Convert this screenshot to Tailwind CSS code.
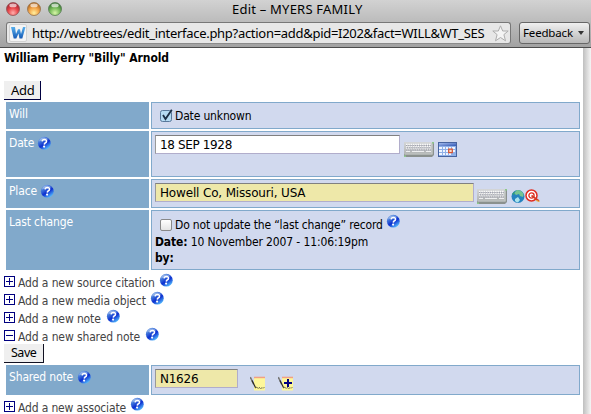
<!DOCTYPE html>
<html lang="en">
<head>
<meta charset="utf-8">
<title>Edit – MYERS FAMILY</title>
<script src="https://cdn.jsdelivr.net/npm/@tailwindcss/browser@4"></script>
</head>
<body class="w-[591px] h-[414px] overflow-hidden bg-white text-black font-['DejaVu_Sans_Condensed','DejaVu_Sans',sans-serif] text-[12px] leading-[16px] tracking-[-0.16px] whitespace-nowrap">
<svg class="absolute w-0 h-0">
  <defs>
    <radialGradient id="red" cx=".5" cy=".8" r=".7"><stop offset="0" stop-color="#ffb0ad"/><stop offset=".55" stop-color="#e9484b"/><stop offset="1" stop-color="#a82430"/></radialGradient>
    <radialGradient id="amber" cx=".5" cy=".8" r=".7"><stop offset="0" stop-color="#fff0a0"/><stop offset=".55" stop-color="#f4a64a"/><stop offset="1" stop-color="#b46a20"/></radialGradient>
    <radialGradient id="green" cx=".5" cy=".8" r=".7"><stop offset="0" stop-color="#d8f5a8"/><stop offset=".55" stop-color="#79bd5c"/><stop offset="1" stop-color="#3d7a34"/></radialGradient>
    <linearGradient id="ball" x1="0" y1="0" x2=".7" y2="1"><stop offset="0" stop-color="#8ab4e8"/><stop offset=".35" stop-color="#3f74da"/><stop offset=".62" stop-color="#0c2fd0"/><stop offset="1" stop-color="#58c0ff"/></linearGradient>
    <linearGradient id="w" x1="0" y1="0" x2="0" y2="1"><stop offset="0" stop-color="#57b0ee"/><stop offset="1" stop-color="#1659b4"/></linearGradient>
    <linearGradient id="keys" x1="0" y1="0" x2="0" y2="1"><stop offset="0" stop-color="#d4d6d8"/><stop offset="1" stop-color="#b0b3b2"/></linearGradient>
    <linearGradient id="cal" x1="0" y1="0" x2="1" y2="1"><stop offset="0" stop-color="#a4bbed"/><stop offset="1" stop-color="#3158b5"/></linearGradient>
  </defs>
  <symbol id="help" viewBox="0 0 14 14"><circle cx="7.3" cy="7.2" r="6.4" fill="url(#ball)"/><path d="M2 5.5Q3 1.5 7 1.4Q10 1.5 11.5 3.5Q6 3 2 5.5Z" fill="#fff" opacity=".35"/><path d="M5.1 5.3Q5.3 3.5 7.5 3.5Q9.6 3.6 9.5 5.3Q9.5 6.4 8.2 7Q7.4 7.4 7.3 8.6" fill="none" stroke="#fff" stroke-width="1.6"/><circle cx="7.1" cy="10.6" r="1.1" fill="#fff"/></symbol>
  <symbol id="plus" viewBox="0 0 11 11"><path d="M.5.5H10.5V10.5H.5ZM2 5.5H9M5.5 2V9" fill="#fff" stroke="#000080" shape-rendering="crispEdges"/></symbol>
  <symbol id="minus" viewBox="0 0 11 11"><path d="M.5.5H10.5V10.5H.5ZM2 5.5H9" fill="#fff" stroke="#000080" shape-rendering="crispEdges"/></symbol>
  <symbol id="keyboard" viewBox="0 0 30 15"><path d="M1 0H30V13L28 15H0V2Z" fill="#8b918e"/><path d="M0 0H28.5V12.5H0Z" fill="url(#keys)"/><path d="M2 2.5H27M2 4.7H27M2 6.9H27" stroke="#fafafa" stroke-width="1.4" stroke-dasharray="1.5 .8"/><path d="M2 3.6H27M2.8 5.8H27M2 8H27" stroke="#8a8ba0" stroke-width=".8" stroke-dasharray="1.2 1"/><path d="M2 9.4H6M8 9.4H20M22 9.4H27" stroke="#f4f5f7"/><path d="M1 12H28V1" fill="none" stroke="#c4c8c5" stroke-width="1.2"/><path d="M0 13.5H2V15H0ZM28 0H30V1.5H28Z" fill="#8cc98a"/></symbol>
  <symbol id="calendar" viewBox="0 0 19 15"><path d="M0 0H19V15H0Z" fill="#47639f"/><path d="M1 1H18V14H1Z" fill="#8fb0e8"/><path d="M1 1H18V4H1Z" fill="url(#cal)"/><path d="M1 5H4V7H1ZM5 5H7V7H5ZM8 5H10V7H8ZM11 5H13V7H11ZM14 5H17V7H14ZM1 8H4V10H1ZM5 8H7V10H5ZM8 8H10V10H8ZM15 8H17V10H15ZM1 11H4V13H1ZM5 11H7V13H5ZM8 11H10V13H8ZM11 11H13V13H11Z" fill="#f0f5ff"/><path d="M10.7 7.2H14.3V10.6H10.7Z" fill="#f4dccc" stroke="#d9532f" stroke-width="1.2"/></symbol>
  <symbol id="note" viewBox="0 0 15 15"><path d="M4 1.5H15V14.5H4Z" fill="#fdf79a"/><path d="M4 .7H15V2.2H4Z" fill="#f2a083"/><path d="M.3 1L3.7 8.3" stroke="#777" stroke-width="1.5"/><path d="M2 4.5L5.6 11.8" stroke="#292929" stroke-width="1.2"/><path d="M5.6 12L7 11L8 12.5L9.5 11.5L10.5 13L12 11.5L13 12.5L14.5 11" fill="none" stroke="#333" stroke-width=".9" stroke-dasharray="1.4 .8"/></symbol>
</svg>

<header class="h-[48px] border-b border-[#4c4c4c] bg-linear-to-b from-[#d2d2d2] to-[#a2a2a2] font-['Noto_Sans','Open_Sans',sans-serif]">
  <div class="h-[22px] flex pt-[2px] pl-[6px] gap-[7px]">
    <svg class="w-[14px] h-[14px]" viewBox="0 0 14 14"><circle cx="7" cy="7" r="6.5" fill="url(#red)" stroke="#8e5054" stroke-width=".8"/><ellipse cx="7" cy="3.4" rx="3.7" ry="1.9" fill="#fff" opacity=".65"/></svg>
    <svg class="w-[14px] h-[14px]" viewBox="0 0 14 14"><circle cx="7" cy="7" r="6.5" fill="url(#amber)" stroke="#957047" stroke-width=".8"/><ellipse cx="7" cy="3.4" rx="3.7" ry="1.9" fill="#fff" opacity=".65"/></svg>
    <svg class="w-[14px] h-[14px]" viewBox="0 0 14 14"><circle cx="7" cy="7" r="6.5" fill="url(#green)" stroke="#547850" stroke-width=".8"/><ellipse cx="7" cy="3.4" rx="3.7" ry="1.9" fill="#fff" opacity=".65"/></svg>
    <div class="ml-[163px] text-[13px] leading-[16px] tracking-[0.22px] -mt-[1px]">Edit – MYERS FAMILY</div>
  </div>
  <div class="flex">
    <div class="ml-[6px] w-[505px] h-[22px] flex border border-[#777] border-b-[#8b8b8b] rounded-[3px] bg-[#e7e7e7]">
      <div class="ml-[2px] mt-px w-[18px] h-[18px] rounded-[2px] bg-[#f4f4f4] border border-[#d2d2d2]">
        <svg class="w-[16px] h-[16px]" viewBox="0 0 16 16"><path d="M1 2H5L6 9L8 4.3H10L11 9L13 2H15.5L12.3 13.5H9.5L8.5 8.5L6.3 13.5H3.7Z" fill="url(#w)"/></svg>
      </div>
      <div class="ml-[5px] w-[455px] text-[13px] leading-[20px] tracking-[-0.29px]">http://webtrees/edit_interface.php?action=add&amp;pid=I202&amp;fact=WILL&amp;WT_SES</div>
      <svg class="ml-[5px] mt-[2px] w-[17px] h-[17px] shrink-0" viewBox="0 0 17 17"><path d="M8.5 .8L10.7 6H16.2L11.9 9.6L13.5 15.8L8.5 12.5L3.5 15.8L5.1 9.6L.8 6H6.3Z" fill="#f4f4f4" stroke="#adadad"/></svg>
    </div>
    <div class="ml-[8px] w-[71px] h-[22px] flex items-center border border-[#666] rounded-[3px] bg-linear-to-b from-[#f0f0f0] to-[#b8b8b8] pl-[3px] text-[11.5px]">
      <span class="w-[50px]">Feedback</span><svg class="ml-[5px] w-[6px] h-[4px] shrink-0" viewBox="0 0 6 4"><path d="M0 0H6L3 4Z" fill="#333"/></svg>
    </div>
  </div>
</header>

<div class="flex h-[366px]">
<main class="w-[583px] shrink-0 pl-[4px]">
  <h1 class="h-[33px] pt-[2px] font-bold tracking-[-0.08px]">William Perry "Billy" Arnold</h1>
  <div class="w-[37px] h-[19px] bg-[#efefef] border-r border-b border-[#000040] pl-[7px] text-[13px] leading-[18px] tracking-[-0.3px] font-['Noto_Sans',sans-serif]">Add</div>

  <section class="ml-[2px] mt-[2px] w-[574px] grid grid-cols-[143px_429px] gap-[2px]">
    <div class="h-[27px] bg-[#81a9cb] text-white pl-[3px] pt-[4px]">Will</div>
    <div class="h-[27px] border border-[#81a9cb] bg-[#d1d9ee] flex pl-[8px] pt-[6px]">
      <svg class="w-[13px] h-[14px]" viewBox="0 0 13 14"><rect x=".5" y="1.5" width="11" height="11" rx="2" fill="#b5daf3" stroke="#58789b"/><path d="M3 6L5.5 10L11.8 .8" fill="none" stroke="#1b2e45" stroke-width="1.8"/></svg>
      <span class="ml-[2px] -mt-px">Date unknown</span>
    </div>

    <div class="h-[46px] bg-[#81a9cb] text-white pl-[3px] pt-[4px] flex"><span class="w-[25px]">Date</span><svg class="ml-[3px] mt-px w-[14px] h-[14px]"><use href="#help"/></svg></div>
    <div class="h-[46px] border border-[#81a9cb] bg-[#d1d9ee] flex pl-[3px] pt-[3px]">
      <div class="w-[245px] h-[19px] border border-t-[#808080] border-l-[#999] border-r-[#b1adcb] border-b-[#b1adcb] bg-white pl-[4px] text-[12px] leading-[19px] tracking-[-0.36px] font-['DejaVu_Sans',sans-serif]">18 SEP 1928</div>
      <svg class="ml-[4px] mt-[7px] w-[30px] h-[15px]"><use href="#keyboard"/></svg>
      <svg class="ml-[4px] mt-[7px] w-[19px] h-[15px]"><use href="#calendar"/></svg>
    </div>

    <div class="h-[29px] bg-[#81a9cb] text-white pl-[3px] pt-[4px] flex"><span class="w-[28px]">Place</span><svg class="ml-[3px] mt-px w-[14px] h-[14px]"><use href="#help"/></svg></div>
    <div class="h-[29px] border border-[#81a9cb] bg-[#d1d9ee] flex pl-[3px] pt-[3px]">
      <div class="w-[319px] h-[19px] border border-t-[#808080] border-l-[#999] border-r-[#b1adcb] border-b-[#b1adcb] bg-[#eee8a9] pl-[4px] text-[12px] leading-[19px] tracking-[-0.16px] font-['DejaVu_Sans',sans-serif]">Howell Co, Missouri, USA</div>
      <svg class="ml-[3px] mt-[6px] w-[30px] h-[15px]"><use href="#keyboard"/></svg>
      <svg class="ml-[4px] mt-[6px] w-[14px] h-[15px]" viewBox="0 0 14 15"><circle cx="7" cy="7.5" r="6.5" fill="#2583bf"/><path d="M6 1Q10 1 12 4Q13 6 12 8L9 7L8 5L5 6L3 4Z" fill="#75c492"/><path d="M4 10L7 8L9 11L7 13.5Q5 13 4 12Z" fill="#a9e3ec"/><path d="M1 5L4 2L3 6Z" fill="#2f9d76"/></svg>
      <svg class="mt-[6px] w-[15px] h-[15px]" viewBox="0 0 15 15"><circle cx="6.5" cy="6.5" r="5.5" fill="#fff" stroke="#e02d22" stroke-width="1.5"/><circle cx="6.5" cy="6.5" r="2.6" fill="#fff" stroke="#e02d22" stroke-width="1.3"/><path d="M6.5 6.5L14 12" stroke="#d33d26" stroke-width="1.6"/><path d="M11 11.5L14.5 12.5" stroke="#edb43b"/></svg>
    </div>

    <div class="h-[60px] bg-[#81a9cb] text-white pl-[3px] pt-[4px]">Last change</div>
    <div class="h-[60px] border border-[#81a9cb] bg-[#d1d9ee] pl-[3px] pt-[3px]">
      <div class="h-[20px] flex pl-[5px]">
        <div class="mt-[5px] w-[12px] h-[12px] rounded-[2px] border border-[#888] bg-linear-to-b from-white to-[#e5e5e5]"></div>
        <span class="ml-[3px] mt-[3px] w-[208px]">Do not update the “last change” record</span>
        <svg class="ml-[3px] w-[14px] h-[14px]"><use href="#help"/></svg>
      </div>
      <div class="tracking-[-0.12px]"><b>Date:</b> 10 November 2007 - 11:06:19pm</div>
      <div><b>by:</b></div>
    </div>
  </section>

  <div class="pt-[3px] text-[#444] tracking-[-0.12px]">
    <div class="h-[18px] flex"><svg class="mt-[3px] w-[11px] h-[11px]"><use href="#plus"/></svg><span class="ml-[3px] mt-[2px] w-[137px]">Add a new source citation</span><svg class="ml-[4px] w-[14px] h-[14px]"><use href="#help"/></svg></div>
    <div class="h-[18px] flex"><svg class="mt-[3px] w-[11px] h-[11px]"><use href="#plus"/></svg><span class="ml-[3px] mt-[2px] w-[128px]">Add a new media object</span><svg class="ml-[4px] w-[14px] h-[14px]"><use href="#help"/></svg></div>
    <div class="h-[18px] flex"><svg class="mt-[3px] w-[11px] h-[11px]"><use href="#plus"/></svg><span class="ml-[3px] mt-[2px] w-[84px]">Add a new note</span><svg class="ml-[4px] w-[14px] h-[14px]"><use href="#help"/></svg></div>
    <div class="h-[17px] flex"><svg class="mt-[3px] w-[11px] h-[11px]"><use href="#minus"/></svg><span class="ml-[3px] mt-[2px] w-[123px]">Add a new shared note</span><svg class="ml-[4px] w-[14px] h-[14px]"><use href="#help"/></svg></div>
  </div>
  <div class="w-[40px] h-[19px] bg-[#efefef] border-r border-b border-[#111122] pl-[7px] text-[12.5px] leading-[18px] tracking-[-0.5px] font-['Noto_Sans',sans-serif]">Save</div>

  <section class="ml-[2px] mt-[2px] w-[574px] grid grid-cols-[143px_429px] gap-[2px]">
    <div class="h-[30px] bg-[#81a9cb] text-white pl-[3px] pt-[4px] flex"><span class="w-[65px]">Shared note</span><svg class="ml-[3px] mt-px w-[14px] h-[14px]"><use href="#help"/></svg></div>
    <div class="h-[30px] border border-[#81a9cb] bg-[#d1d9ee] flex pl-[3px] pt-[3px]">
      <div class="w-[83px] h-[19px] border border-t-[#808080] border-l-[#999] border-r-[#b1adcb] border-b-[#b1adcb] bg-[#eee8a9] pl-[4px] text-[12px] leading-[19px] tracking-[-0.25px] font-['DejaVu_Sans',sans-serif]">N1626</div>
      <svg class="ml-[12px] mt-[7px] w-[15px] h-[15px]"><use href="#note"/></svg>
      <svg class="ml-[13px] mt-[7px] w-[15px] h-[15px]" viewBox="0 0 15 15"><use href="#note" width="15" height="15"/><path d="M6 7H14M10 3V11" stroke="#000080" stroke-width="2"/></svg>
    </div>
  </section>
  <div class="h-[18px] flex pt-[2px] text-[#444]"><svg class="mt-[4px] w-[11px] h-[11px]"><use href="#plus"/></svg><span class="ml-[3px] mt-[3px] w-[108px]">Add a new associate</span><svg class="ml-[4px] w-[14px] h-[14px]"><use href="#help"/></svg></div>
</main>
<aside class="w-[8px] bg-linear-to-r from-[#bfbfbf] to-[#f5f5f5]"></aside>
</div>
</body>
</html>
